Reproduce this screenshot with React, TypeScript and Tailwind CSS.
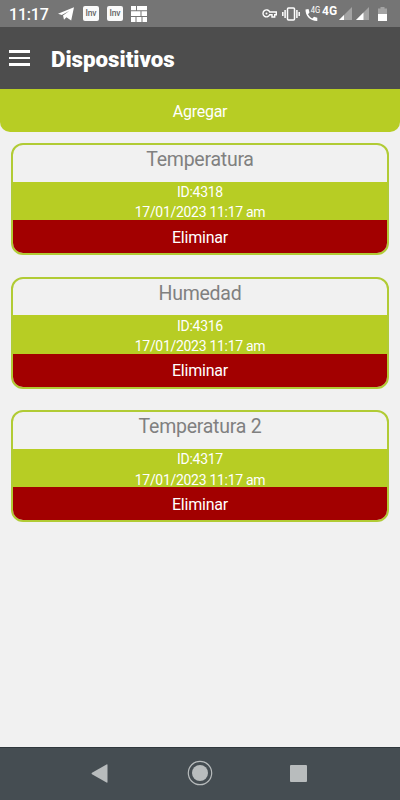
import React from 'react';

interface Device {
  id: number;
  name: string;
  date: string;
}

const devices: Device[] = [
  { id: 4318, name: 'Temperatura', date: '17/01/2023 11:17 am' },
  { id: 4316, name: 'Humedad', date: '17/01/2023 11:17 am' },
  { id: 4317, name: 'Temperatura 2', date: '17/01/2023 11:17 am' },
];

function InvIcon() {
  return (
    <div className="flex h-[15px] w-[16px] items-center justify-center rounded-[2px] bg-[#fafafa] text-[8.5px] leading-none font-medium tracking-[-0.2px] text-[#666666]">
      Inv
    </div>
  );
}

function SignalIcon() {
  return (
    <svg width="13" height="13" viewBox="0 0 13 13">
      <path d="M13 0v13H0z" fill="#a3a3a3" />
      <path d="M5 8V13H0z" fill="#fff" />
    </svg>
  );
}

function StatusBar() {
  return (
    <div className="flex h-[27px] items-center justify-between bg-[#757575] text-white">
      {/* Clock and notifications */}
      <div className="flex items-center pl-[9px]">
        <span className="w-[49px] pt-[2px] text-[16px] leading-none font-medium tracking-[-0.2px]">11:17</span>
        <svg width="16" height="14" viewBox="0 0 16 14" fill="#fff">
          <path d="M16 .3 13.2 13.5 8.4 10.300 6 12.800 5 8.500 11.500 3.800 3.800 8.100 0 6.700z" />
        </svg>
        <div className="ml-[9px] flex gap-2">
          <InvIcon />
          <InvIcon />
        </div>
        <svg className="ml-[8px]" width="16" height="16" viewBox="0 0 16 16" fill="#fff">
          <path d="M0 0h5v4.300H0zM6 0h10v4.300H6zM0 5.300h9.500V10H0zM10.500 5.300H16V10h-5.500zM0 11h4.500v5H0zM5.500 11h5v5h-5zM11.500 11H16v5h-4.500z" />
        </svg>
      </div>

      {/* System indicators */}
      <div className="flex items-center pr-[13px]">
        <svg className="-ml-px" width="15" height="9" viewBox="0 0 15 9" fill="none" stroke="#fff" strokeWidth="1.4">
          <path d="M7.700 3H14.300V5.800H12.700V8H10V5.800H7.700A3.500 3.500 0 1 1 7.700 3z" />
          <circle cx="4.500" cy="4.400" r="1" fill="#fff" stroke="none" />
        </svg>
        <svg className="ml-[5px]" width="18" height="14" viewBox="0 0 18 14" fill="none" stroke="#fff" strokeWidth="1.500">
          <rect x="5.500" y="1" width="7" height="12" rx="1" />
          <path d="M.8 5v4M3.100 3v8M14.900 3v8M17.200 5v4" />
        </svg>
        <svg className="ml-[5px]" width="16" height="16" viewBox="0 0 16 16" fill="#fff">
          <path d="M.5 3.500 3.500 3 4.500 6.500 3 8.200C4 10 5.500 11.500 7.300 12.400L9 10.800 12.300 11.700V15C5.500 15.200.3 10 .5 3.500z" />
          <text x="5.800" y="7.400" fontSize="8.500" textLength="9.500" lengthAdjust="spacingAndGlyphs">4G</text>
        </svg>
        <span className="mb-[5px] ml-px w-[17px] text-[12px] leading-none font-bold">4G</span>
        <SignalIcon />
        <svg className="ml-1" width="13" height="13" viewBox="0 0 13 13">
          <path d="M13 0v13H0z" fill="#a3a3a3" />
          <path d="M7.500 5.500V13H0z" fill="#fff" />
        </svg>
        <svg className="ml-[9px]" width="9" height="14" viewBox="0 0 9 14">
          <path d="M2.500 0h4v1.500H9V7H0V1.500h2.500z" fill="#a3a3a3" />
          <path d="M0 7h9v7H0z" fill="#fff" />
        </svg>
      </div>
    </div>
  );
}

function DeviceCard({ device }: { device: Device }) {
  return (
    <div className="h-[112px] overflow-hidden rounded-[12px] border-2 border-[#b1cb35] text-center">
      <h2 className="h-[36.500px] pt-px text-[19.500px] leading-[28px] tracking-[-0.250px] text-[#808080]">{device.name}</h2>
      <div className="h-[38.500px] bg-[#b7cd24] pt-[0.500px] text-[14px] leading-[20.300px] tracking-[-0.300px] text-white">
        <p>ID:{device.id}</p>
        <p>{device.date}</p>
      </div>
      <button className="block h-[33px] w-full bg-[#a20000] pt-[2px] text-[16px] tracking-[-0.200px] text-white">Eliminar</button>
    </div>
  );
}

export default function App() {
  return (
    <div className="flex h-[800px] w-[400px] flex-col overflow-hidden bg-[#f1f1f1] font-['Roboto',sans-serif]">
      <StatusBar />

      <header className="flex h-[62px] items-center bg-[#4d4d4d] pl-[9px] text-white">
        <button className="flex w-[21px] flex-col gap-[4px]">
          <span className="h-[2.500px] w-full bg-white" />
          <span className="h-[2.500px] w-full bg-white" />
          <span className="h-[2.500px] w-full bg-white" />
        </button>
        <h1 className="ml-[21px] pt-[3px] text-[22.300px] font-black">Dispositivos</h1>
      </header>

      <button className="h-[43px] shrink-0 rounded-b-[10px] bg-[#b7cd24] pt-[2px] text-[16px] tracking-[-0.250px] text-white">Agregar</button>

      <main className="flex flex-1 flex-col gap-[21.700px] px-[11px] pt-[11px]">
        {devices.map((device) => (
          <DeviceCard key={device.id} device={device} />
        ))}
      </main>

      {/* Android navigation */}
      <nav className="flex h-[53px] items-center border-t border-[#30383d] bg-[#454d52] pb-[2px]">
        <svg className="ml-[91px]" width="17" height="19" viewBox="0 0 17 19" fill="#b8bcbd">
          <path d="M16.500 1v17q0 1-1 .5L1 10.200q-1-.7 0-1.400L15.500.5q1-.5 1 .5z" />
        </svg>
        <svg className="ml-[79px]" width="26" height="26" viewBox="0 0 26 26">
          <circle cx="13" cy="13" r="11.700" fill="none" stroke="#b8bcbd" strokeWidth="1.200" />
          <circle cx="13" cy="13" r="8" fill="#b8bcbd" />
        </svg>
        <div className="ml-[77px] size-[17px] rounded-[1px] bg-[#b8bcbd]" />
      </nav>
    </div>
  );
}
